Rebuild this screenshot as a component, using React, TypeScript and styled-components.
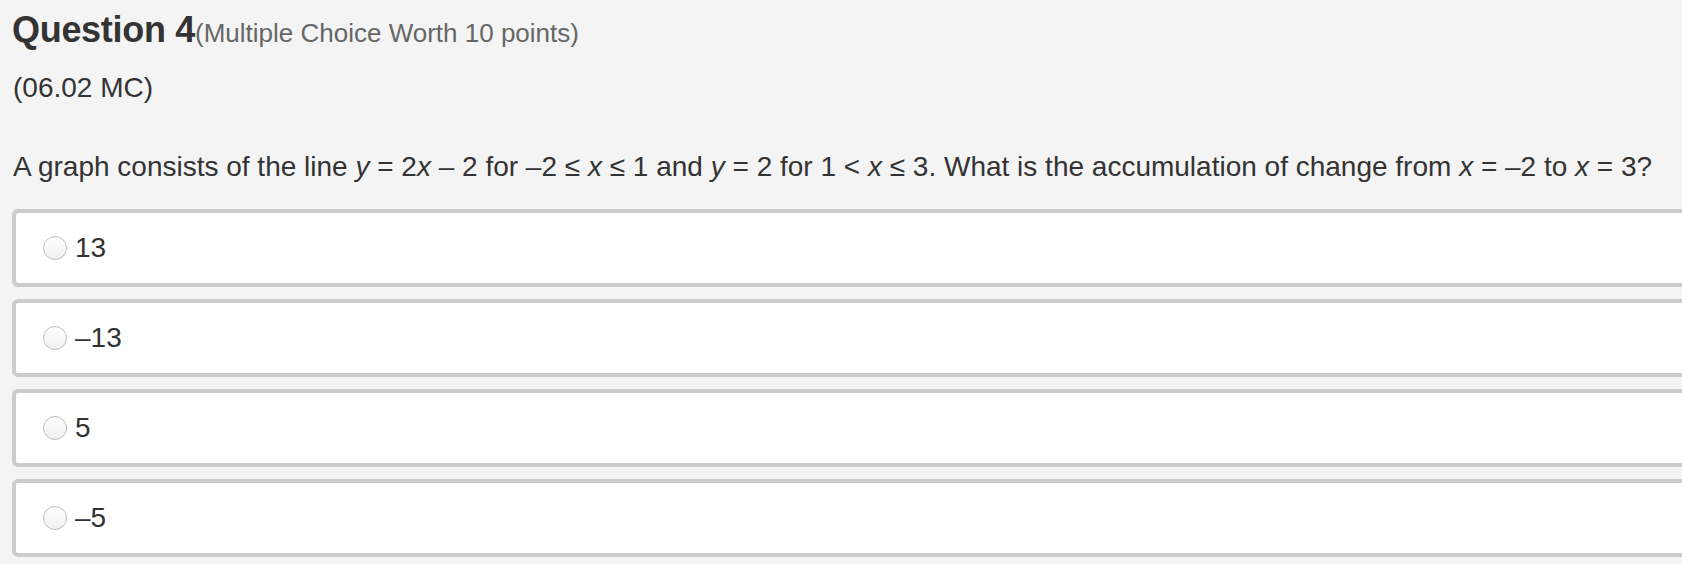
import React from "react";
import styled, { createGlobalStyle } from "styled-components";

const GlobalStyle = createGlobalStyle`
  html, body {
    margin: 0;
    padding: 0;
    background: #f4f4f4;
    overflow: hidden;
  }
  body {
    font-family: "Liberation Sans", Arial, Helvetica, sans-serif;
    color: #333;
  }
`;

const Page = styled.main`
  padding: 9px 0 0 12px;
  min-height: 564px;
  box-sizing: border-box;
  background: #f4f4f4;
`;

const TitleRow = styled.h2`
  margin: 0;
  font-size: 36px;
  line-height: 42px;
  font-weight: 700;
  color: #333;
  letter-spacing: -0.3px;
`;

const Worth = styled.span`
  font-size: 26px;
  font-weight: 400;
  color: #666;
  letter-spacing: 0;
`;

const Code = styled.p`
  margin: 19px 0 0 1px;
  font-size: 28px;
  line-height: 30px;
  color: #333;
`;

const Prompt = styled.p`
  margin: 49px 0 0 1px;
  font-size: 28px;
  line-height: 30px;
  color: #333;
  white-space: nowrap;
`;

const Var = styled.i`
  font-style: italic;
`;

const Options = styled.div`
  display: flex;
  flex-direction: column;
  gap: 12px;
  margin: 27px -40px 0 0;
`;

const Option = styled.label`
  display: flex;
  align-items: center;
  gap: 8px;
  height: 78px;
  box-sizing: border-box;
  padding-left: 27px;
  background: #fff;
  border: 4px solid #cccccc;
  border-radius: 6px;
  font-size: 28px;
  color: #333;
`;

const Radio = styled.span`
  flex: none;
  width: 24px;
  height: 24px;
  border-radius: 50%;
  box-sizing: border-box;
  border: 1px solid #bdbdbd;
  background: linear-gradient(#ffffff, #f0f0f0);
  box-shadow: inset 0 1px 1px rgba(255, 255, 255, 0.9);
`;

const choices = ["13", "–13", "5", "–5"];

export default function App() {
  return (
    <>
      <GlobalStyle />
      <Page>
        <TitleRow>
          Question 4<Worth>(Multiple Choice Worth 10 points)</Worth>
        </TitleRow>
        <Code>(06.02 MC)</Code>
        <Prompt>
          A graph consists of the line <Var>y</Var> = 2<Var>x</Var> – 2 for –2 ≤ <Var>x</Var> ≤ 1 and{" "}
          <Var>y</Var> = 2 for 1 &lt; <Var>x</Var> ≤ 3. What is the accumulation of change from{" "}
          <Var>x</Var> = –2 to <Var>x</Var> = 3?
        </Prompt>
        <Options>
          {choices.map((c) => (
            <Option key={c}>
              <Radio />
              {c}
            </Option>
          ))}
        </Options>
      </Page>
    </>
  );
}
